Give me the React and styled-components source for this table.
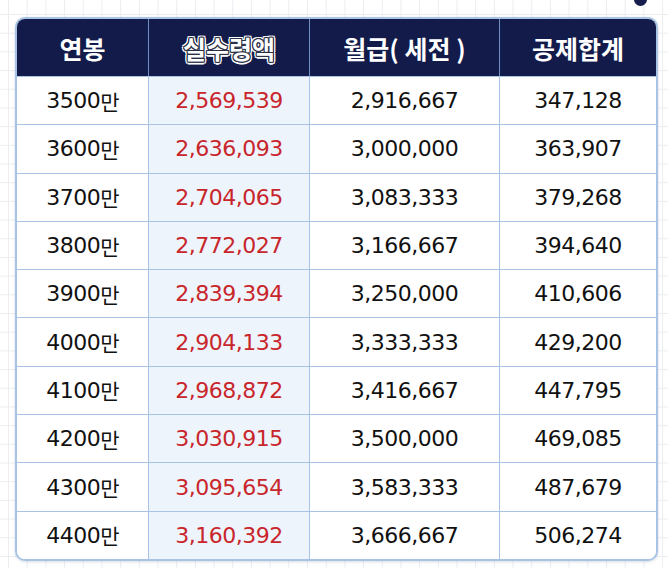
import React from "react";
import styled, { createGlobalStyle } from "styled-components";

const Global = createGlobalStyle`
  html, body {
    margin: 0;
    padding: 0;
  }
  body {
    width: 668px;
    height: 568px;
    overflow: hidden;
    background-color: #fff;
    background-image:
      linear-gradient(to right, #ebedf1 1px, transparent 1px),
      linear-gradient(to bottom, #ebedf1 1px, transparent 1px);
    background-size: 18.7px 18.7px;
    background-position: 8px 14px;
    font-family: "Noto Sans CJK KR", "Noto Sans", sans-serif;
  }
`;

const Page = styled.div`
  position: relative;
  height: 568px;
  padding: 17px 10px 0 15px;
  box-sizing: border-box;
`;

const Dot = styled.div`
  position: absolute;
  top: -7px;
  left: 634px;
  width: 13px;
  height: 13px;
  border-radius: 50%;
  background: #151d4c;
`;

const Table = styled.div`
  display: grid;
  grid-template-columns: 131px 161px 190px 1fr;
  grid-template-rows: 57px repeat(10, 48.3px);
  width: 643px;
  box-sizing: border-box;
  border: 2px solid #a8c3e4;
  border-radius: 10px;
  overflow: hidden;
  background: #fff;
  box-shadow: 0 1px 3px rgba(40, 60, 100, 0.18);
`;

const Head = styled.div`
  display: flex;
  align-items: center;
  justify-content: center;
  background: #131b4b;
  color: #fff;
  font-size: 25px;
  font-weight: 700;
  white-space: pre;
  border-left: ${(p) => (p.$first ? "none" : "1.5px solid #6f8fc0")};
  ${(p) =>
    p.$outline &&
    `
    text-shadow:
      1px 0 0 #2a2f45, -1px 0 0 #2a2f45, 0 1px 0 #2a2f45, 0 -1px 0 #2a2f45,
      1px 1px 0 #2a2f45, -1px -1px 0 #2a2f45, 1px -1px 0 #2a2f45, -1px 1px 0 #2a2f45,
      2.5px 0 0 #fff, -2.5px 0 0 #fff, 0 2.5px 0 #fff, 0 -2.5px 0 #fff,
      2px 2px 0 #fff, -2px -2px 0 #fff, 2px -2px 0 #fff, -2px 2px 0 #fff;
  `}
`;

const Cell = styled.div`
  display: flex;
  align-items: center;
  justify-content: center;
  font-family: "DejaVu Sans", "Noto Sans CJK KR", sans-serif;
  font-size: 22px;
  letter-spacing: -0.5px;
  color: ${(p) => (p.$red ? "#c8262b" : "#111")};
  background: ${(p) => (p.$tint ? "#eef4fc" : "#fff")};
  border-top: 1.5px solid #a8c3e4;
  border-left: ${(p) => (p.$first ? "none" : "1.5px solid #a8c3e4")};
`;

const Unit = styled.span`
  font-family: "Noto Sans CJK KR", sans-serif;
  font-size: 21px;
  letter-spacing: -1px;
`;

const rows = [
  ["3500", "2,569,539", "2,916,667", "347,128"],
  ["3600", "2,636,093", "3,000,000", "363,907"],
  ["3700", "2,704,065", "3,083,333", "379,268"],
  ["3800", "2,772,027", "3,166,667", "394,640"],
  ["3900", "2,839,394", "3,250,000", "410,606"],
  ["4000", "2,904,133", "3,333,333", "429,200"],
  ["4100", "2,968,872", "3,416,667", "447,795"],
  ["4200", "3,030,915", "3,500,000", "469,085"],
  ["4300", "3,095,654", "3,583,333", "487,679"],
  ["4400", "3,160,392", "3,666,667", "506,274"],
];

export default function App() {
  return (
    <>
      <Global />
      <Page>
        <Dot />
        <Table>
          <Head $first>연봉</Head>
          <Head $outline>실수령액</Head>
          <Head>월급( 세전 )</Head>
          <Head>공제합계</Head>
          {rows.map((r) => (
            <React.Fragment key={r[0]}>
              <Cell $first>
                {r[0]}
                <Unit>만</Unit>
              </Cell>
              <Cell $red $tint>{r[1]}</Cell>
              <Cell>{r[2]}</Cell>
              <Cell>{r[3]}</Cell>
            </React.Fragment>
          ))}
        </Table>
      </Page>
    </>
  );
}
